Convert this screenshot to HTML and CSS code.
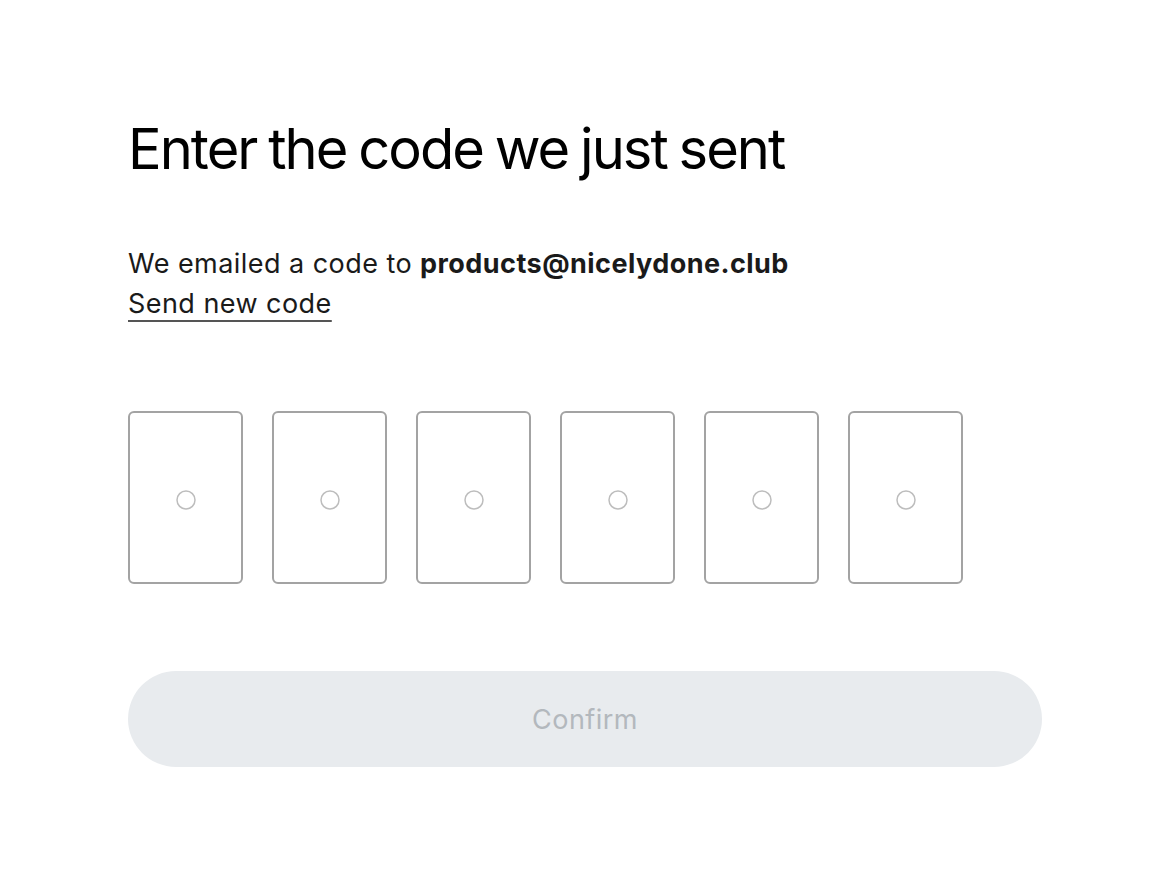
FILE: index.html
```html
<!DOCTYPE html>
<html lang="en">
<head>
    <meta charset="UTF-8">
    <title>Verify code</title>
    <link rel="stylesheet" href="styles.css">
</head>
<body>
<div class="page">
    <h1 class="title">Enter the code we just sent</h1>
    <p class="note">We emailed a code to <b>products@nicelydone.club</b><br>
        <a class="resend" href="#">Send new code</a></p>
    <div class="digits">
        <div class="digit"><svg width="20" height="20" viewBox="0 0 20 20"><circle cx="10" cy="10" r="9" fill="none" stroke="#bdbdbd" stroke-width="1.5"/></svg></div>
        <div class="digit"><svg width="20" height="20" viewBox="0 0 20 20"><circle cx="10" cy="10" r="9" fill="none" stroke="#bdbdbd" stroke-width="1.5"/></svg></div>
        <div class="digit"><svg width="20" height="20" viewBox="0 0 20 20"><circle cx="10" cy="10" r="9" fill="none" stroke="#bdbdbd" stroke-width="1.5"/></svg></div>
        <div class="digit"><svg width="20" height="20" viewBox="0 0 20 20"><circle cx="10" cy="10" r="9" fill="none" stroke="#bdbdbd" stroke-width="1.5"/></svg></div>
        <div class="digit"><svg width="20" height="20" viewBox="0 0 20 20"><circle cx="10" cy="10" r="9" fill="none" stroke="#bdbdbd" stroke-width="1.5"/></svg></div>
        <div class="digit"><svg width="20" height="20" viewBox="0 0 20 20"><circle cx="10" cy="10" r="9" fill="none" stroke="#bdbdbd" stroke-width="1.5"/></svg></div>
    </div>
    <button class="confirm" disabled>Confirm</button>
</div>
</body>
</html>
```

FILE: styles.css
```css
body{margin:0;background:#fff;font-family:Inter,"Noto Sans",sans-serif;color:#1a1a1a;}
.page{padding:117px 128px 0;}
.title{margin:0;font-size:56px;line-height:64px;font-weight:400;letter-spacing:-0.035em;word-spacing:-2px;color:#000;}
.note{margin:63px 0 0;font-size:27px;line-height:40px;letter-spacing:0.45px;}
.note b{font-weight:700;}
.resend{color:#1a1a1a;text-decoration:underline;text-decoration-color:#555;text-decoration-thickness:2px;text-underline-offset:7px;}
.digits{display:flex;gap:29px;margin-top:87px;}
.digit{width:115px;height:173px;box-sizing:border-box;border:2px solid #a3a3a3;border-radius:6px;display:flex;align-items:center;justify-content:center;}
.digit svg{display:block;margin-top:4px;}
.confirm{display:block;width:100%;height:96px;margin-top:87px;border:none;border-radius:48px;background:#e8ebee;color:#b3b8bd;font-family:inherit;font-size:27px;letter-spacing:0.45px;}
```
